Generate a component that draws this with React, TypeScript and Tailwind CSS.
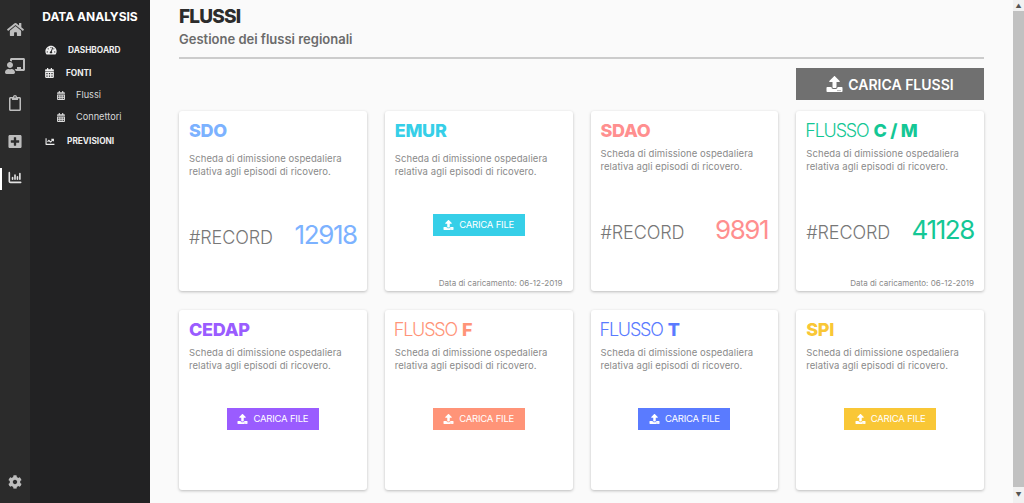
import React from "react";
import { FaHome, FaChalkboardTeacher, FaRegClipboard, FaPlusSquare, FaCog, FaTachometerAlt, FaCalendarAlt, FaChartLine, FaUpload } from "react-icons/fa";
import { FaChartColumn } from "react-icons/fa6";

const font = { fontFamily: "Inter, 'Liberation Sans', sans-serif" };

type CardData = {
  light?: string;
  bold: string;
  color: string;
  titleGap: string;
  record?: string;
  recordTop?: string;
  buttonTop?: string;
  date?: boolean;
};

const cards: CardData[] = [
  { bold: "SDO", color: "#7cb2ff", titleGap: "mt-[9px]", record: "12918", recordTop: "mt-[41px]" },
  { bold: "EMUR", color: "#36cfe8", titleGap: "mt-[9px]", buttonTop: "mt-[36px]", date: true },
  { bold: "SDAO", color: "#ff8f8f", titleGap: "mt-[4px]", record: "9891", recordTop: "mt-[41px]" },
  { light: "FLUSSO", bold: "C / M", color: "#14c795", titleGap: "mt-[4px]", record: "41128", recordTop: "mt-[41px]", date: true },
  { bold: "CEDAP", color: "#9a5cff", titleGap: "mt-[4px]", buttonTop: "mt-[36px]" },
  { light: "FLUSSO", bold: "F", color: "#ff9478", titleGap: "mt-[4px]", buttonTop: "mt-[36px]" },
  { light: "FLUSSO", bold: "T", color: "#5a7bff", titleGap: "mt-[4px]", buttonTop: "mt-[36px]" },
  { bold: "SPI", color: "#f9c736", titleGap: "mt-[4px]", buttonTop: "mt-[36px]" },
];

function Card({ c }: { c: CardData }) {
  return (
    <div className="h-[180px] bg-white rounded-[3px] shadow-[0_1px_3px_rgba(0,0,0,0.25)] px-[10px] pt-[8px] pb-[2px] flex flex-col">
      <div className="h-[24px] leading-[24px] text-[18px] whitespace-nowrap" style={{ color: c.color }}>
        {c.light && <span className="font-light tracking-[-1.2px] -ml-px mr-[5px]">{c.light}</span>}
        <span className="font-extrabold tracking-[-0.3px]">{c.bold}</span>
      </div>
      <p className={`${c.titleGap} text-[9.5px] leading-[13px] text-[#8a8a8a] tracking-[0.08px]`}>
        Scheda di dimissione ospedaliera
        <br />
        relativa agli episodi di ricovero.
      </p>
      {c.record && (
        <div className={`${c.recordTop} flex items-baseline justify-between`}>
          <span className="text-[18px] font-light text-[#777] tracking-[-0.1px]">#RECORD</span>
          <span className="text-[26px] leading-[32px] font-normal tracking-[-1.4px]" style={{ color: c.color }}>{c.record}</span>
        </div>
      )}
      {c.buttonTop && (
        <button
          className={`${c.buttonTop} self-center w-[92px] h-[22px] flex items-center justify-center gap-[5px] text-white text-[9.5px] tracking-[-0.2px]`}
          style={{ backgroundColor: c.color }}
        >
          <FaUpload className="w-[11px] h-[10px]" />
          CARICA FILE
        </button>
      )}
      {c.date && (
        <div className="mt-auto text-right text-[8px] leading-[11px] text-[#8a8a8a]">Data di caricamento: 06-12-2019</div>
      )}
    </div>
  );
}

function SubItem({ label }: { label: string }) {
  return (
    <div className="flex items-center gap-[11px] pl-[27px] h-[22px] text-[9.2px] text-[#d8d8d8]">
      <FaCalendarAlt className="w-[8px] h-[9px] text-[#ddd]" />
      {label}
    </div>
  );
}

export default function App() {
  return (
    <div className="flex h-[503px] w-[1024px] overflow-hidden bg-[#fafafa]" style={font}>
      <aside className="w-[30px] bg-[#2b2b2b] flex flex-col items-center text-[#bdbdbd] pt-[22px] pb-[14px] shrink-0">
        <FaHome className="w-[17px] h-[15px]" />
        <FaChalkboardTeacher className="w-[20px] h-[16px] mt-[21px]" />
        <FaRegClipboard className="w-[12px] h-[16px] mt-[21px]" />
        <FaPlusSquare className="w-[14px] h-[15px] mt-[23px]" />
        <div className="relative mt-[22px] w-full flex justify-center">
          <div className="absolute left-0 top-[-3px] w-[2px] h-[22px] bg-white" />
          <FaChartColumn className="w-[16px] h-[13px] text-[#e2e2e2]" />
        </div>
        <FaCog className="w-[14px] h-[14px] mt-auto" />
      </aside>
      <nav className="w-[120px] bg-[#222223] text-white shrink-0 pt-[9px] flex flex-col">
        <div className="text-[12px] font-bold text-center leading-[16px] tracking-[0px]">DATA ANALYSIS</div>
        <div className="mt-[17px] flex items-center pl-[15px] h-[16px] text-[8.3px] font-bold text-[#eee]">
          <FaTachometerAlt className="w-[12px] h-[10px]" />
          <span className="ml-[11px]">DASHBOARD</span>
        </div>
        <div className="mt-[7px] flex items-center pl-[15px] h-[16px] text-[8.3px] font-bold text-[#eee]">
          <FaCalendarAlt className="w-[9px] h-[10px]" />
          <span className="ml-[12px]">FONTI</span>
        </div>
        <div className="mt-[3px]"><SubItem label="Flussi" /><SubItem label="Connettori" /></div>
        <div className="mt-[5px] flex items-center pl-[15px] h-[16px] text-[8.3px] font-bold text-[#eee]">
          <FaChartLine className="w-[10px] h-[9px]" />
          <span className="ml-[12px]">PREVISIONI</span>
        </div>
      </nav>
      <main className="flex-1 pl-[29px] pr-[29px] pt-[5px] min-w-0">
        <h1 className="text-[19px] leading-[24px] font-extrabold tracking-[-0.8px] text-[#2c2c2c]">FLUSSI</h1>
        <h2 className="text-[13px] leading-[20px] font-semibold text-[#6b6b6b]">Gestione dei flussi regionali</h2>
        <div className="mt-[8px] h-[2px] bg-[#cccccc]" />
        <div className="mt-[9px] flex justify-end">
          <button className="w-[188px] h-[32px] bg-[#707070] text-white text-[14px] font-semibold flex items-center justify-center gap-[5px]">
            <FaUpload className="w-[17px] h-[16px]" />
            CARICA FLUSSI
          </button>
        </div>
        <div className="mt-[11px] grid grid-cols-4 gap-x-[18px] gap-y-[19px]">
          {cards.map((c) => (
            <Card key={c.bold} c={c} />
          ))}
        </div>
      </main>
      <div className="w-[11px] bg-[#f1f1f1] shrink-0 flex flex-col items-center">
        <div className="h-[11px] text-[#555] text-[6px] leading-[11px]">▲</div>
        <div className="w-full h-[476px] bg-[#c1c1c1]" />
        <div className="h-[16px] text-[#555] text-[6px] leading-[16px]">▼</div>
      </div>
    </div>
  );
}
